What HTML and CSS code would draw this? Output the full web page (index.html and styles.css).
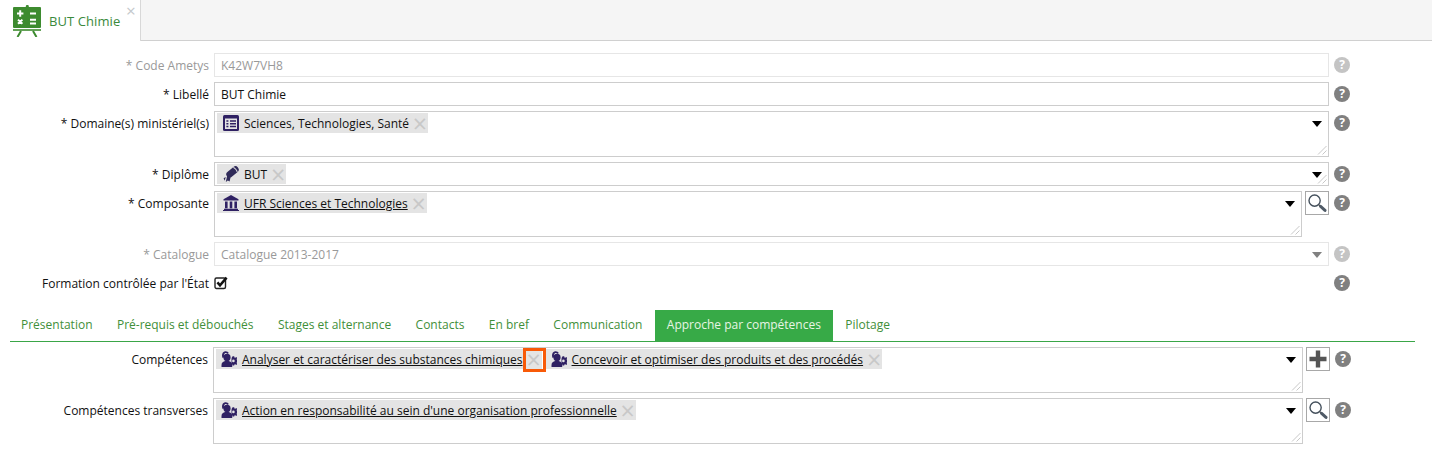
FILE: index.html
```html
<!DOCTYPE html>
<html lang="fr">
<head>
<meta charset="utf-8">
<title>BUT Chimie</title>
<link rel="stylesheet" href="styles.css">
</head>
<body>
<svg class="defs" width="0" height="0" aria-hidden="true">
  <defs>
    <symbol id="person" viewBox="0 0 16 16">
      <path d="M0.5 16v-2c0-2.4 1.9-3.5 3.6-3.9h3.6c1.8.4 3.5 1.5 3.5 3.9v2z"/>
      <circle cx="6" cy="6.4" r="3.6"/>
      <path d="M1.6 7C.2 3.6 1.6.4 4.4.2c1.6-.1 2.8.6 3.3 1.8L6.7 3C6 2 5 1.7 4.2 2.1 3 2.7 2.7 4.6 3.1 6.2z"/>
      <path d="M11.6 5.2h1.6l.2 1.2.9.4 1-.7 1 1-.7 1 .4.9.9.2v1.6l-.9.2-.4.9.7 1-1 1-1-.7-.9.4-.2 1h-1.6l-.2-1-.9-.4V8l.2-1.2z"/>
      <circle cx="12.4" cy="9.9" r="1.3" fill="#e4e4e4"/>
    </symbol>
    <symbol id="search" viewBox="0 0 20 20">
      <circle cx="7.6" cy="7.6" r="5.6" fill="none" stroke="#44505c" stroke-width="1.4"/>
      <path d="M11.8 11.8l1.6 1.4" stroke="#555" stroke-width="1.4"/>
      <path d="M13.6 13.4l4.4 4" stroke="#4f5a66" stroke-width="3" stroke-linecap="round"/>
    </symbol>
    <symbol id="grip" viewBox="0 0 10 10">
      <path d="M1 9.5L9.5 1M5.5 9.5L9.5 5.5" stroke="#c8c8c8" stroke-width="1" fill="none"/>
    </symbol>
  </defs>
</svg>

<header class="tabstrip">
  <div class="doc-tab">
    <svg class="board" viewBox="0 0 28 32" aria-hidden="true">
      <rect x="12.8" y="0" width="3" height="3" rx="1.2" fill="#3d8b2f"/>
      <rect x="0" y="2" width="28" height="21" rx="1" fill="#3d8b2f"/>
      <rect x="0" y="24.2" width="28" height="1.6" fill="#3d8b2f"/>
      <path d="M8 26L4.5 32M20 26l3.5 6" stroke="#3d8b2f" stroke-width="2" fill="none"/>
      <path d="M4 8.5h6.4M7.2 5.3v6.4M17 8.5h6" stroke="#fff" stroke-width="2" fill="none"/>
      <path d="M5 14.6l4.4 4.2M9.4 14.6l-4.4 4.2M17 14.8h6M17 18.6h6" stroke="#fff" stroke-width="2" fill="none"/>
    </svg>
    <span class="doc-title">BUT Chimie</span>
    <span class="doc-close">×</span>
  </div>
</header>

<main>
  <section class="form">
    <div class="row off">
      <div class="label">* Code Ametys</div>
      <div class="field"><span class="value">K42W7VH8</span></div>
      <div class="help">?</div>
    </div>
    <div class="row">
      <div class="label">* Libellé</div>
      <div class="field"><span class="value">BUT Chimie</span></div>
      <div class="help">?</div>
    </div>
    <div class="row">
      <div class="label">* Domaine(s) ministériel(s)</div>
      <div class="field tall">
        <span class="chip">
          <svg class="ico" viewBox="0 0 16 16" aria-hidden="true"><rect width="16" height="16" rx="1.5" fill="#2f2163"/><rect x="2" y="3.5" width="12" height="10.5" fill="#e4e4e4"/><path d="M3.4 6h2M7 6h6M3.4 8.7h2M7 8.7h6M3.4 11.4h2M7 11.4h6" stroke="#2f2163" stroke-width="1.5"/></svg>
          <span>Sciences, Technologies, Santé</span>
          <span class="x">×</span>
        </span>
        <i class="arrow"></i>
        <svg class="grip"><use href="#grip"/></svg>
      </div>
      <div class="help">?</div>
    </div>
    <div class="row">
      <div class="label">* Diplôme</div>
      <div class="field">
        <span class="chip">
          <svg class="ico" viewBox="0 0 16 16" aria-hidden="true"><g transform="rotate(-40 9.5 6)"><rect x="2.5" y="2.8" width="14" height="6.4" rx="3" fill="#2f2a58"/><path d="M13 3c1 .8 1 5.2 0 6" fill="none" stroke="#e4e4e4" stroke-width="1"/></g><path d="M4.2 9.6L2.8 16l2-1.4 1.8.9.8-3.4zM.6 12.2l1.2 2.6.9-3.8z" fill="#2f2a58"/></svg>
          <span>BUT</span>
          <span class="x">×</span>
        </span>
        <i class="arrow"></i>
        <svg class="grip"><use href="#grip"/></svg>
      </div>
      <div class="help">?</div>
    </div>
    <div class="row">
      <div class="label">* Composante</div>
      <div class="field tall">
        <span class="chip">
          <svg class="ico" viewBox="0 0 16 16" aria-hidden="true"><path d="M8 0L.5 4.2v1.4h15V4.2z" fill="#2f2163"/><path d="M2 6.5h2.6v6.7H2zM6.7 6.5h2.6v6.7H6.7zM11.4 6.5H14v6.7h-2.6zM1 13.8h14V15H1zM0 15h16v1H0z" fill="#2f2163"/></svg>
          <a href="#">UFR Sciences et Technologies</a>
          <span class="x">×</span>
        </span>
        <i class="arrow"></i>
        <svg class="grip"><use href="#grip"/></svg>
      </div>
      <button class="btn" type="button"><svg class="btn-ico"><use href="#search"/></svg></button>
      <div class="help">?</div>
    </div>
    <div class="row off">
      <div class="label">* Catalogue</div>
      <div class="field"><span class="value">Catalogue 2013-2017</span><i class="arrow"></i></div>
      <div class="help">?</div>
    </div>
    <div class="row">
      <div class="label">Formation contrôlée par l'État</div>
      <div class="field bare">
        <svg class="check" viewBox="0 0 14 14" aria-hidden="true"><rect x="1" y="2" width="10.5" height="10.5" rx="1.5" fill="none" stroke="#222" stroke-width="1.4"/><path d="M3.4 6.4l2.6 3L12.6 1.6" fill="none" stroke="#111" stroke-width="2.5"/></svg>
      </div>
      <div class="help">?</div>
    </div>
  </section>

  <nav class="tabs">
    <a class="tab" href="#">Présentation</a>
    <a class="tab" href="#">Pré-requis et débouchés</a>
    <a class="tab" href="#">Stages et alternance</a>
    <a class="tab" href="#">Contacts</a>
    <a class="tab" href="#">En bref</a>
    <a class="tab" href="#">Communication</a>
    <a class="tab active" href="#">Approche par compétences</a>
    <a class="tab" href="#">Pilotage</a>
  </nav>

  <section class="form inner">
    <div class="row">
      <div class="label">Compétences</div>
      <div class="field tall">
        <span class="chip">
          <svg class="ico person"><use href="#person"/></svg>
          <a href="#">Analyser et caractériser des substances chimiques</a>
          <span class="x marked">×</span>
        </span>
        <span class="chip">
          <svg class="ico person"><use href="#person"/></svg>
          <a href="#">Concevoir et optimiser des produits et des procédés</a>
          <span class="x">×</span>
        </span>
        <i class="arrow"></i>
        <svg class="grip"><use href="#grip"/></svg>
      </div>
      <button class="btn" type="button">
        <svg class="btn-ico" viewBox="0 0 20 20" aria-hidden="true"><path d="M7.8 1.5h4.4v6.3h6.3v4.4h-6.3v6.3H7.8v-6.3H1.5V7.8h6.3z" fill="#555"/></svg>
      </button>
      <div class="help">?</div>
    </div>
    <div class="row">
      <div class="label">Compétences transverses</div>
      <div class="field tall">
        <span class="chip">
          <svg class="ico person"><use href="#person"/></svg>
          <a href="#">Action en responsabilité au sein d'une organisation professionnelle</a>
          <span class="x">×</span>
        </span>
        <i class="arrow"></i>
        <svg class="grip"><use href="#grip"/></svg>
      </div>
      <button class="btn" type="button"><svg class="btn-ico"><use href="#search"/></svg></button>
      <div class="help">?</div>
    </div>
  </section>
</main>
</body>
</html>
```

FILE: styles.css
```css
*, *::before, *::after { box-sizing: border-box; }

html, body {
  margin: 0;
  background: #fff;
  color: #111;
  font-family: "Open Sans", "Liberation Sans", sans-serif;
  font-size: 12px;
  overflow: hidden;
}

.defs { position: absolute; }

.tabstrip {
  height: 41px;
  background: #f5f5f5;
  border-bottom: 1px solid #d0d0d0;
}

.doc-tab {
  position: relative;
  display: flex;
  align-items: center;
  width: 141px;
  height: 41px;
  padding: 0 0 0 13px;
  background: #fff;
  border-right: 1px solid #d8d8d8;
}

.board {
  width: 28px;
  height: 32px;
  flex: none;
  margin-top: 1px;
}

.doc-title {
  margin-left: 8px;
  margin-top: 1px;
  font-size: 13px;
  letter-spacing: 0.08px;
  color: #3a8a3c;
}

.doc-close {
  position: absolute;
  top: 4px;
  left: 126px;
  font-size: 17px;
  line-height: 14px;
  color: #c4c8cc;
}

.form {
  width: 1350px;
  padding: 12px 0 0 14px;
}

.form.inner {
  width: 1351px;
  padding: 5px 0 0 13px;
}

.row {
  display: flex;
  align-items: flex-start;
  margin-bottom: 5px;
}

.label {
  flex: none;
  width: 195px;
  height: 24px;
  margin-right: 5px;
  line-height: 26px;
  text-align: right;
  white-space: nowrap;
}

.field {
  position: relative;
  flex: 1;
  display: flex;
  flex-wrap: wrap;
  align-items: flex-start;
  align-content: flex-start;
  height: 24px;
  padding: 1px 2px;
  border: 1px solid #cdcdcd;
}

.field.tall { height: 46px; }

.field.bare {
  border: 0;
  padding: 5px 0 0 0;
}

.value {
  padding: 0 0 0 4px;
  line-height: 21px;
}

.chip {
  display: inline-flex;
  align-items: center;
  height: 20px;
  padding-left: 6px;
  margin-right: 4px;
  background: #e4e4e4;
  white-space: nowrap;
}

.chip a { color: #111; }

.ico {
  width: 16px;
  height: 16px;
  flex: none;
  margin-right: 5px;
}

.person {
  fill: #2f2163;
  margin-left: -1px;
  margin-right: 5px;
}

.x {
  position: relative;
  display: block;
  width: 16px;
  margin-left: 3px;
  font-size: 25px;
  line-height: 19px;
  text-align: center;
  color: #c8c8c8;
}

.x.marked::after {
  content: "";
  position: absolute;
  top: -2px;
  left: -3px;
  width: 23px;
  height: 24px;
  border: 3px solid #f85a08;
}

.arrow {
  position: absolute;
  top: 9px;
  right: 6px;
  width: 0;
  height: 0;
  border-top: 6px solid #000;
  border-left: 5px solid transparent;
  border-right: 5px solid transparent;
}

.grip {
  position: absolute;
  right: 1px;
  bottom: 1px;
  width: 10px;
  height: 10px;
}

.btn {
  flex: none;
  width: 24px;
  height: 24px;
  margin: 0 0 0 3px;
  padding: 1px;
  display: flex;
  align-items: center;
  justify-content: center;
  background: #fff;
  border: 1px solid #a8a8a8;
}

.btn-ico {
  width: 20px;
  height: 20px;
}

.help {
  flex: none;
  width: 16px;
  height: 16px;
  margin: 4px 0 0 5px;
  border-radius: 50%;
  background: #808080;
  color: #fff;
  font-size: 12px;
  font-weight: 700;
  line-height: 16px;
  text-align: center;
}

.check {
  display: block;
  width: 14px;
  height: 14px;
  margin-left: 0;
}

.off .label,
.off .value { color: #999; }

.off .field { border-color: #e6e6e6; }

.off .arrow { border-top-color: #808080; }

.off .help { background: #c4c4c4; }

.tabs {
  display: flex;
  gap: 0.4px;
  height: 32px;
  margin: 15px 17px 0 10px;
  border-bottom: 1px solid #3aa648;
}

.tab {
  padding: 0 12px 0 11px;
  line-height: 30px;
  color: #3f8f3a;
  text-decoration: none;
  white-space: nowrap;
}

.tab + .tab { padding-left: 12px; }

.tab.active {
  height: 31px;
  background: #37aa47;
  color: #e8f5e4;
}
```
